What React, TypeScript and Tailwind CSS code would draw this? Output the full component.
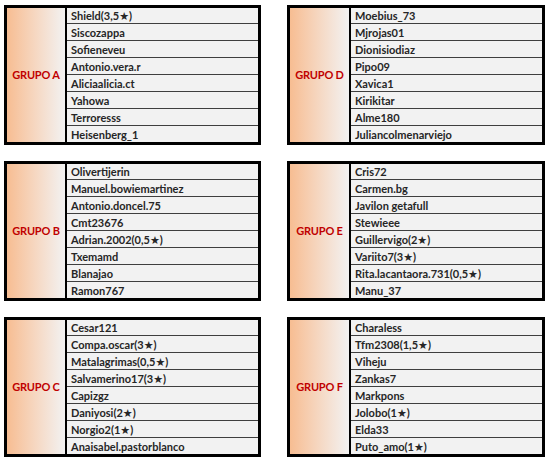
import React from 'react';

type Group = {
  label: string;
  players: string[];
  labelWidth: string;
};

const left: Group[] = [
  {
    label: 'GRUPO A',
    labelWidth: 'w-[60px]',
    players: ['Shield(3,5★)', 'Siscozappa', 'Sofieneveu', 'Antonio.vera.r', 'Aliciaalicia.ct', 'Yahowa', 'Terroresss', 'Heisenberg_1'],
  },
  {
    label: 'GRUPO B',
    labelWidth: 'w-[60px]',
    players: ['Olivertijerin', 'Manuel.bowiemartinez', 'Antonio.doncel.75', 'Cmt23676', 'Adrian.2002(0,5★)', 'Txemamd', 'Blanajao', 'Ramon767'],
  },
  {
    label: 'GRUPO C',
    labelWidth: 'w-[60px]',
    players: ['Cesar121', 'Compa.oscar(3★)', 'Matalagrimas(0,5★)', 'Salvamerino17(3★)', 'Capizgz', 'Daniyosi(2★)', 'Norgio2(1★)', 'Anaisabel.pastorblanco'],
  },
];

const right: Group[] = [
  {
    label: 'GRUPO D',
    labelWidth: 'w-[61px]',
    players: ['Moebius_73', 'Mjrojas01', 'Dionisiodiaz', 'Pipo09', 'Xavica1', 'Kirikitar', 'Alme180', 'Juliancolmenarviejo'],
  },
  {
    label: 'GRUPO E',
    labelWidth: 'w-[61px]',
    players: ['Cris72', 'Carmen.bg', 'Javilon getafull', 'Stewieee', 'Guillervigo(2★)', 'Variito7(3★)', 'Rita.lacantaora.731(0,5★)', 'Manu_37'],
  },
  {
    label: 'GRUPO F',
    labelWidth: 'w-[61px]',
    players: ['Charaless', 'Tfm2308(1,5★)', 'Viheju', 'Zankas7', 'Markpons', 'Jolobo(1★)', 'Elda33', 'Puto_amo(1★)'],
  },
];

const GroupTable = ({ group }: { group: Group }) => {
  return (
    <div className="flex border-[3px] border-black">
      {/* Label */}
      <div
        className={`${group.labelWidth} shrink-0 flex items-center justify-center border-r-2 border-black bg-gradient-to-r from-[#f7bd92] to-[#f2f2f2]`}
      >
        <span className="text-[11px] font-bold tracking-[-0.2px] text-[#c00000]">{group.label}</span>
      </div>

      {/* Players */}
      <div className="flex-1 flex flex-col bg-[#f2f2f2]">
        {group.players.map((name, i) => (
          <div
            key={i}
            className={`flex items-center pl-[4px] text-[11px] font-bold leading-none text-[#262626] ${
              i === 0 ? 'h-[15px]' : 'h-[17px] border-t border-[#3f3f3f]'
            } ${i === 7 ? 'h-[15px]' : ''}`}
          >
            {name}
          </div>
        ))}
      </div>
    </div>
  );
};

const App = () => {
  return (
    <div
      className="w-[551px] h-[459px] bg-white pt-[5px] pl-[4px] flex gap-[26px]"
      style={{ fontFamily: 'Lato, "DejaVu Sans", sans-serif' }}
    >
      <div className="w-[257px] flex flex-col gap-[16px]">
        {left.map((g) => (
          <GroupTable key={g.label} group={g} />
        ))}
      </div>
      <div className="w-[258px] flex flex-col gap-[16px]">
        {right.map((g) => (
          <GroupTable key={g.label} group={g} />
        ))}
      </div>
    </div>
  );
};

export default App;
